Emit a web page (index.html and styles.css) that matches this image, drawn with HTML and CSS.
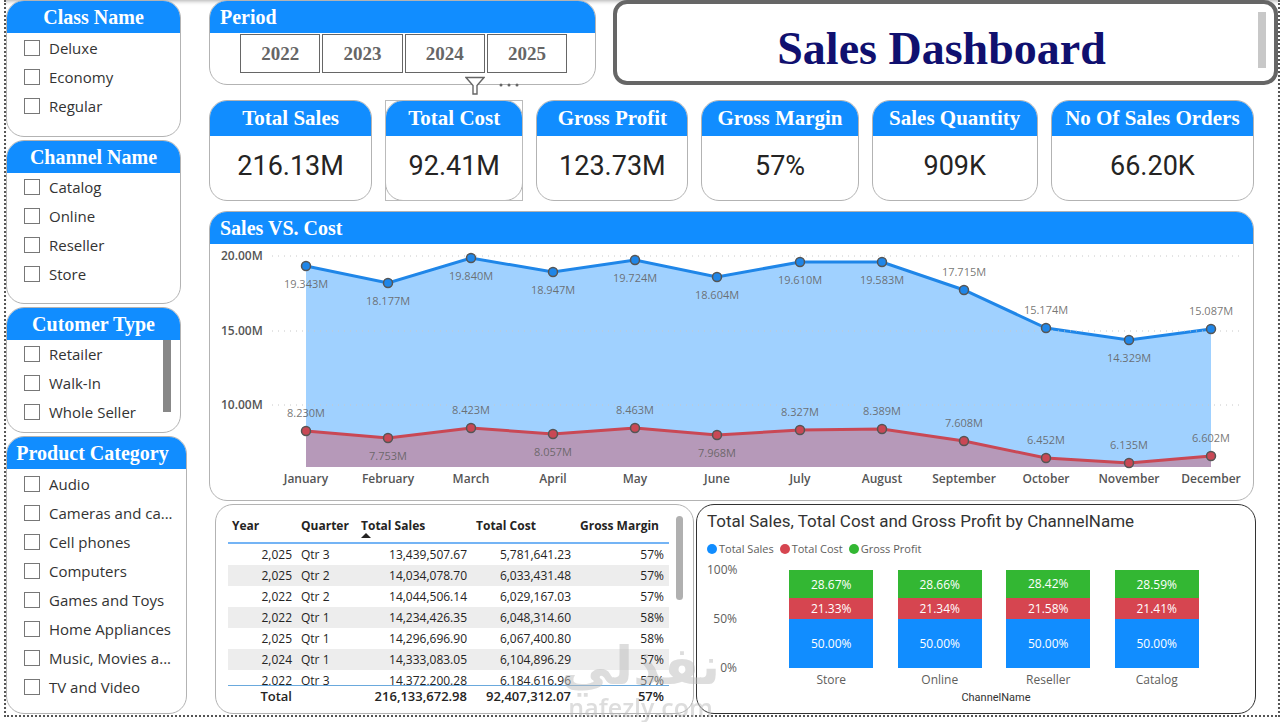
FILE: index.html
```
<!DOCTYPE html>
<html lang="en">
<head>
  <meta charset="UTF-8">
  <title>Sales Dashboard</title>
  <link rel="stylesheet" href="styles.css">
</head>
<body>
  <div class="dashboard">
    <aside class="sidebar">
      <section class="card slicer">
        <h2 class="card-title">Class Name</h2>
        <div class="options">
          <label><input type="checkbox"><span>Deluxe</span></label>
          <label><input type="checkbox"><span>Economy</span></label>
          <label><input type="checkbox"><span>Regular</span></label>
        </div>
      </section>
      <section class="card slicer">
        <h2 class="card-title">Channel Name</h2>
        <div class="options">
          <label><input type="checkbox"><span>Catalog</span></label>
          <label><input type="checkbox"><span>Online</span></label>
          <label><input type="checkbox"><span>Reseller</span></label>
          <label><input type="checkbox"><span>Store</span></label>
        </div>
      </section>
      <section class="card slicer">
        <h2 class="card-title">Cutomer Type</h2>
        <div class="slicer-body">
          <div class="options">
            <label><input type="checkbox"><span>Retailer</span></label>
            <label><input type="checkbox"><span>Walk-In</span></label>
            <label><input type="checkbox"><span>Whole Seller</span></label>
          </div>
          <div class="slicer-thumb"></div>
        </div>
      </section>
      <section class="card slicer wide">
        <h2 class="card-title">Product Category</h2>
        <div class="options">
          <label><input type="checkbox"><span>Audio</span></label>
          <label><input type="checkbox"><span>Cameras and ca...</span></label>
          <label><input type="checkbox"><span>Cell phones</span></label>
          <label><input type="checkbox"><span>Computers</span></label>
          <label><input type="checkbox"><span>Games and Toys</span></label>
          <label><input type="checkbox"><span>Home Appliances</span></label>
          <label><input type="checkbox"><span>Music, Movies a...</span></label>
          <label><input type="checkbox"><span>TV and Video</span></label>
        </div>
      </section>
    </aside>

    <main class="main">
      <div class="top-row">
        <section class="card period">
          <h2 class="card-title left">Period</h2>
          <div class="years">
            <button>2022</button>
            <button>2023</button>
            <button>2024</button>
            <button>2025</button>
          </div>
        </section>
        <header class="page-title">
          <h1>Sales Dashboard</h1>
          <div class="title-thumb"></div>
        </header>
      </div>

      <div class="kpis">
        <section class="card kpi">
          <h2 class="card-title">Total Sales</h2>
          <p>216.13M</p>
        </section>
        <div class="selected">
          <section class="card kpi">
            <h2 class="card-title">Total Cost</h2>
            <p>92.41M</p>
          </section>
          <div class="visual-tools">
            <svg width="20" height="19" viewBox="0 0 20 19" fill="#fff" stroke="#666" stroke-width="1.4">
              <path d="M1 1.5h18l-7 8v8.500h-4v-8.500z"/>
            </svg>
            <svg width="20" height="19" viewBox="0 0 20 19" fill="#666">
              <circle cx="2" cy="9" r="1.500"/><circle cx="10" cy="9" r="1.500"/><circle cx="18" cy="9" r="1.500"/>
            </svg>
          </div>
        </div>
        <section class="card kpi">
          <h2 class="card-title">Gross Profit</h2>
          <p>123.73M</p>
        </section>
        <section class="card kpi">
          <h2 class="card-title">Gross Margin</h2>
          <p>57%</p>
        </section>
        <section class="card kpi">
          <h2 class="card-title">Sales Quantity</h2>
          <p>909K</p>
        </section>
        <section class="card kpi">
          <h2 class="card-title">No Of Sales Orders</h2>
          <p>66.20K</p>
        </section>
      </div>

      <section class="card trend">
        <h2 class="card-title left">Sales VS. Cost</h2>
        <svg id="trendChart" class="trend-chart" viewBox="0 0 1043 256"></svg>
      </section>

      <div class="bottom-row">
        <section class="card table-card">
          <div class="table-scroll">
            <table>
              <thead>
                <tr>
                  <th>Year</th>
                  <th>Quarter</th>
                  <th class="sorted">Total Sales</th>
                  <th>Total Cost</th>
                  <th>Gross Margin</th>
                </tr>
              </thead>
              <tbody>
                <tr><td>2,025</td><td>Qtr 3</td><td>13,439,507.67</td><td>5,781,641.23</td><td>57%</td></tr>
                <tr><td>2,025</td><td>Qtr 2</td><td>14,034,078.70</td><td>6,033,431.48</td><td>57%</td></tr>
                <tr><td>2,022</td><td>Qtr 2</td><td>14,044,506.14</td><td>6,029,167.03</td><td>57%</td></tr>
                <tr><td>2,022</td><td>Qtr 1</td><td>14,234,426.35</td><td>6,048,314.60</td><td>58%</td></tr>
                <tr><td>2,025</td><td>Qtr 1</td><td>14,296,696.90</td><td>6,067,400.80</td><td>58%</td></tr>
                <tr><td>2,024</td><td>Qtr 1</td><td>14,333,083.05</td><td>6,104,896.29</td><td>57%</td></tr>
                <tr><td>2,022</td><td>Qtr 3</td><td>14,372,200.28</td><td>6,184,616.96</td><td>57%</td></tr>
              </tbody>
              <tfoot>
                <tr><td>Total</td><td></td><td>216,133,672.98</td><td>92,407,312.07</td><td>57%</td></tr>
              </tfoot>
            </table>
          </div>
          <div class="table-thumb"></div>
        </section>

        <section class="card channel-card">
          <h3>Total Sales, Total Cost and Gross Profit by ChannelName</h3>
          <div class="legend">
            <span class="key sales">Total Sales</span>
            <span class="key cost">Total Cost</span>
            <span class="key profit">Gross Profit</span>
          </div>
          <div class="channel-chart">
            <div class="y-axis"><span>100%</span><span>50%</span><span>0%</span></div>
            <div class="bars">
              <div class="column">
                <div class="bar">
                  <span class="profit" style="height:28.67%">28.67%</span>
                  <span class="cost" style="height:21.33%">21.33%</span>
                  <span class="sales" style="height:50%">50.00%</span>
                </div>
                <div class="name">Store</div>
              </div>
              <div class="column">
                <div class="bar">
                  <span class="profit" style="height:28.66%">28.66%</span>
                  <span class="cost" style="height:21.34%">21.34%</span>
                  <span class="sales" style="height:50%">50.00%</span>
                </div>
                <div class="name">Online</div>
              </div>
              <div class="column">
                <div class="bar">
                  <span class="profit" style="height:28.42%">28.42%</span>
                  <span class="cost" style="height:21.58%">21.58%</span>
                  <span class="sales" style="height:50%">50.00%</span>
                </div>
                <div class="name">Reseller</div>
              </div>
              <div class="column">
                <div class="bar">
                  <span class="profit" style="height:28.59%">28.59%</span>
                  <span class="cost" style="height:21.41%">21.41%</span>
                  <span class="sales" style="height:50%">50.00%</span>
                </div>
                <div class="name">Catalog</div>
              </div>
            </div>
          </div>
          <div class="x-title">ChannelName</div>
        </section>

        <div class="watermark">
          <span class="ar" lang="ar" dir="rtl">نفذلي</span>
          <span class="en">nafezly.com</span>
        </div>
      </div>
    </main>
  </div>
  <script src="chart.js"></script>
</body>
</html>
```
FILE: styles.css
```
* {
  box-sizing: border-box;
}

body {
  margin: 0;
  padding: 0 0 5px 4px;
  background-color: #fff;
  font-family: "Open Sans", "Segoe UI", sans-serif;
  color: #333;
}

h1, h2, h3, p {
  margin: 0;
}

.dashboard {
  display: flex;
  gap: 22px;
  padding-bottom: 1px;
  border: 2px dotted #555;
  border-top: none;
  box-shadow: inset 0 4px 4px -3px #aaa;
}

.card {
  background-color: #fff;
  border: 1px solid #b3b3b3;
  border-radius: 18px;
  overflow: hidden;
}

.card-title {
  height: 32px;
  background-color: #118dff;
  color: #fff;
  font-family: "Liberation Serif", serif;
  font-size: 20px;
  font-weight: bold;
  line-height: 32px;
  text-align: center;
  white-space: nowrap;
}

.card-title.left {
  padding-left: 10px;
  text-align: left;
}

/* slicers */
.sidebar {
  width: 181px;
  flex-shrink: 0;
  display: grid;
  grid-template-rows: 137fr 164fr 127fr 278fr;
  gap: 3px;
}

.slicer {
  margin-right: 6px;
}

.slicer.wide {
  margin-right: 0;
}

.slicer.wide .card-title {
  padding-right: 8px;
}

.slicer-body {
  display: flex;
  justify-content: space-between;
}

.slicer-thumb {
  width: 8px;
  height: 72px;
  margin-right: 9px;
  background-color: #888;
}

.options {
  padding-left: 17px;
}

.options label {
  display: flex;
  align-items: center;
  gap: 9px;
  height: 29px;
  font-size: 15px;
  white-space: nowrap;
}

.options input {
  appearance: none;
  flex-shrink: 0;
  width: 16px;
  height: 16px;
  margin: 0;
  border: 1px solid #777;
  background-color: #fff;
}

.options input:checked {
  background-color: #333;
}

/* main column */
.main {
  flex: 1;
  min-width: 0;
}

.top-row {
  display: grid;
  grid-template-columns: 387fr 665fr;
  gap: 17px;
}

.period {
  height: 85px;
}

.years {
  display: flex;
  justify-content: center;
  gap: 2px;
  padding: 1px 28px 0 30px;
}

.years button {
  flex: 1;
  height: 39px;
  padding: 0;
  border: 1px solid #666;
  background-color: #fff;
  color: #666;
  font-family: "Liberation Serif", serif;
  font-size: 19px;
  font-weight: bold;
}

.page-title {
  display: flex;
  padding: 8px;
  border: 4px solid #666;
  border-radius: 14px;
  background-color: #fff;
}

.page-title h1 {
  flex: 1;
  padding-top: 13px;
  color: #10106f;
  font-family: "Liberation Serif", serif;
  font-size: 46px;
  line-height: 48px;
  text-align: center;
}

.title-thumb {
  width: 8px;
  height: 56px;
  background-color: #c8c8c8;
}

.kpis {
  display: grid;
  grid-template-columns: 163fr 138fr 152fr 157fr 166fr 203fr;
  gap: 13px;
  margin: 15px 24px 10px 0;
}

.kpi {
  height: 101px;
}

.kpi .card-title {
  height: 35px;
  font-size: 21px;
  line-height: 35px;
}

.kpi p {
  color: #252423;
  font-family: Roboto, sans-serif;
  font-size: 27px;
  line-height: 60px;
  text-align: center;
}

.selected {
  position: relative;
  outline: 1px solid #bbb;
  outline-offset: -1px;
}

.visual-tools {
  position: absolute;
  top: -24px;
  right: 4px;
  display: flex;
  gap: 14px;
}

.trend {
  margin-right: 24px;
}

.trend-chart {
  display: block;
  width: 100%;
}

.trend-chart .grid-line {
  stroke: #c8c8c8;
  stroke-dasharray: 1 5;
}

.trend-chart .axis {
  fill: #555;
  font-size: 12px;
  font-weight: 600;
}

.trend-chart .value {
  fill: #605e5c;
  fill-opacity: 0.85;
  font-size: 11px;
  text-anchor: middle;
}

.trend-chart .month {
  text-anchor: middle;
}

.trend-chart circle {
  stroke: #555;
  stroke-width: 1.5;
}

/* table and channel chart */
.bottom-row {
  position: relative;
  display: grid;
  grid-template-columns: 479fr 560fr;
  gap: 2px;
  margin: 3px 22px 0 6px;
}

.table-card {
  display: flex;
  gap: 7px;
  height: 210px;
  padding: 11px 10px 0 12px;
}

.table-scroll {
  flex: 1;
  height: 190px;
  overflow: hidden;
}

.table-thumb {
  width: 7px;
  height: 84px;
  border-radius: 4px;
  background-color: #b0b0b0;
}

table {
  width: 100%;
  border-collapse: separate;
  border-spacing: 0;
  table-layout: fixed;
  color: #252423;
  font-size: 12px;
}

th {
  height: 28px;
  padding: 0 0 7px 4px;
  border-bottom: 2px solid #74b4f5;
  font-weight: 700;
  line-height: 19px;
  text-align: left;
  white-space: nowrap;
}

th:nth-child(1) { width: 69px; }
th:nth-child(2) { width: 60px; }
th:nth-child(3) { width: 115px; }
th:nth-child(4) { width: 104px; }

.sorted {
  position: relative;
}

.sorted::after {
  content: "";
  position: absolute;
  left: 4px;
  bottom: 4px;
  border: 5px solid transparent;
  border-top: none;
  border-bottom-color: #252423;
}

td {
  height: 21px;
  padding: 0 5px 0 4px;
  line-height: 20px;
  text-align: right;
}

td:nth-child(2) {
  text-align: left;
}

tbody tr:nth-child(even) {
  background-color: #ededed;
}

tfoot td {
  position: sticky;
  bottom: 0;
  border-top: 1px solid #6aa9dd;
  background-color: #fff;
  font-size: 13px;
  font-weight: 600;
}

.channel-card {
  padding: 6px 10px 0;
  border-color: #333;
}

.channel-card h3 {
  font-family: Roboto, sans-serif;
  font-size: 17px;
  font-weight: normal;
  line-height: 20px;
}

.legend {
  display: flex;
  gap: 6px;
  padding: 10px 0 13px;
  color: #605e5c;
  font-size: 11px;
  line-height: 16px;
}

.key::before {
  content: "";
  display: inline-block;
  width: 10px;
  height: 10px;
  margin-right: 2px;
  border-radius: 50%;
  vertical-align: -1px;
}

.key.sales::before, .bar .sales { background-color: #118dff; }
.key.cost::before, .bar .cost { background-color: #d64550; }
.key.profit::before, .bar .profit { background-color: #33b733; }

.channel-chart {
  display: flex;
  gap: 40px;
  padding-right: 34px;
}

.y-axis {
  width: 30px;
  height: 114px;
  margin-top: -8px;
  display: flex;
  flex-direction: column;
  justify-content: space-between;
  color: #605e5c;
  font-size: 12px;
  line-height: 16px;
  text-align: right;
}

.bars {
  flex: 1;
  display: flex;
}

.column {
  flex: 1;
}

.bar {
  width: 77%;
  height: 98px;
  margin: 0 auto;
}

.bar span {
  display: flex;
  align-items: center;
  justify-content: center;
  color: #fff;
  font-size: 12px;
}

.name {
  color: #605e5c;
  font-size: 12px;
  line-height: 24px;
  text-align: center;
}

.x-title {
  padding-left: 40px;
  font-family: Roboto, sans-serif;
  font-size: 11px;
  line-height: 12px;
  text-align: center;
}

.watermark {
  position: absolute;
  left: 346px;
  bottom: -6px;
  display: flex;
  flex-direction: column;
  align-items: center;
  color: #bbb;
  opacity: 0.5;
  pointer-events: none;
}

.watermark .ar {
  font-family: "DejaVu Sans", sans-serif;
  font-size: 52px;
  font-weight: bold;
  line-height: 56px;
}

.watermark .en {
  font-size: 25px;
  font-weight: 600;
  line-height: 26px;
}
```
FILE: chart.js
```
const months = ["January", "February", "March", "April", "May", "June", "July",
  "August", "September", "October", "November", "December"];

// side: 1 puts the label under the point, -1 above it
const series = [
  {
    color: "#118dff", line: "#1f86e8",
    values: [19.343, 18.177, 19.840, 18.947, 19.724, 18.604, 19.610, 19.583, 17.715, 15.174, 14.329, 15.087],
    side: [1, 1, 1, 1, 1, 1, 1, 1, -1, -1, 1, -1]
  },
  {
    color: "#d64550", line: "#c94855",
    values: [8.230, 7.753, 8.423, 8.057, 8.463, 7.968, 8.327, 8.389, 7.608, 6.452, 6.135, 6.602],
    side: [-1, 1, -1, 1, -1, 1, -1, -1, -1, -1, -1, -1]
  }
];

const base = 223;
const x = i => Math.round(96 + i * 905 / 11);
const y = v => Math.round(12 + (20 - v) * 14.9);

let out = "";

series.forEach(s => {
  const points = s.values.map((v, i) => x(i) + "," + y(v)).join(" ");
  out += `<polygon points="${x(0)},${base} ${points} ${x(11)},${base}" fill="${s.color}" fill-opacity="0.4"/>`;
  out += `<polyline points="${points}" fill="none" stroke="${s.line}" stroke-width="3"/>`;
});

[20, 15, 10].forEach(v => {
  out += `<line class="grid-line" x1="62" x2="1030" y1="${y(v)}" y2="${y(v)}"/>`;
  out += `<text class="axis" x="11" y="${y(v) + 4}">${v.toFixed(2)}M</text>`;
});

series.forEach(s => {
  s.values.forEach((v, i) => {
    out += `<circle cx="${x(i)}" cy="${y(v)}" r="4.5" fill="${s.line}"/>`;
    out += `<text class="value" x="${x(i)}" y="${y(v) + 4 + 18 * s.side[i]}">${v.toFixed(3)}M</text>`;
  });
});

months.forEach((m, i) => {
  out += `<text class="axis month" x="${x(i)}" y="239">${m}</text>`;
});

document.getElementById("trendChart").innerHTML = out;
```
